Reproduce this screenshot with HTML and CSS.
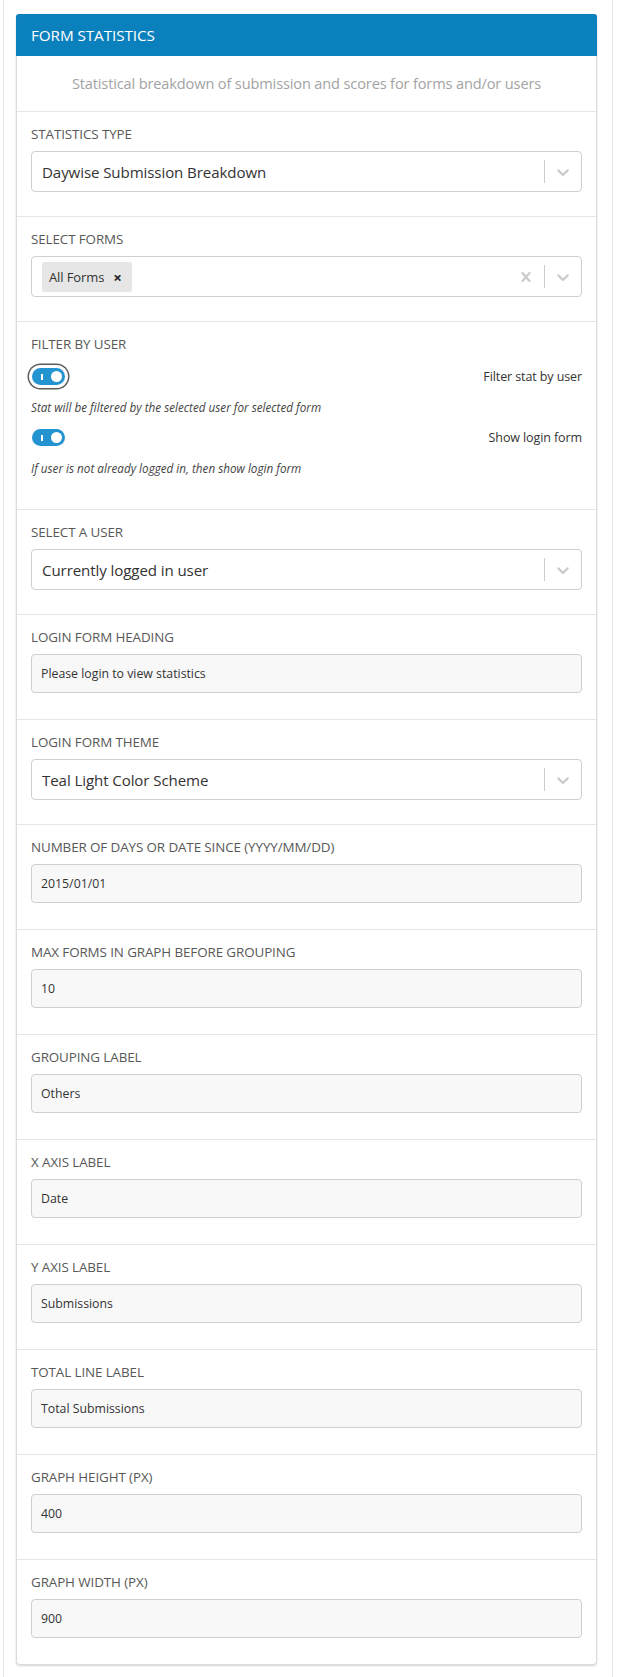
FILE: index.html
```html
<!DOCTYPE html>
<html>
<head>
<meta charset="utf-8">
<title>Form Statistics</title>
<link rel="stylesheet" href="styles.css">
</head>
<body>
<div class="wrap">
  <div class="panel">
    <div class="panel-head">FORM STATISTICS</div>
    <div class="panel-desc">Statistical breakdown of submission and scores for forms and/or users</div>

    <div class="field">
      <div class="label">STATISTICS TYPE</div>
      <div class="select">
        <div class="select-value">Daywise Submission Breakdown</div>
        <span class="sep"></span>
        <span class="ind"><svg viewBox="0 0 20 20" width="20" height="20"><path d="M4.516 7.548c0.436-0.446 1.043-0.481 1.576 0l3.908 3.747 3.908-3.747c0.533-0.481 1.141-0.446 1.574 0 0.436 0.445 0.408 1.197 0 1.615-0.406 0.418-4.695 4.502-4.695 4.502-0.217 0.223-0.502 0.335-0.787 0.335s-0.57-0.112-0.789-0.335c0 0-4.287-4.084-4.695-4.502s-0.436-1.17 0-1.615z"/></svg></span>
      </div>
    </div>

    <div class="field">
      <div class="label">SELECT FORMS</div>
      <div class="select multi">
        <div class="select-value"><span class="tag">All Forms <b class="tag-x">×</b></span></div>
        <span class="ind"><svg viewBox="0 0 20 20" width="20" height="20"><path d="M14.348 14.849c-0.469 0.469-1.229 0.469-1.697 0l-2.651-3.030-2.651 3.029c-0.469 0.469-1.229 0.469-1.697 0-0.469-0.469-0.469-1.229 0-1.697l2.758-3.15-2.759-3.152c-0.469-0.469-0.469-1.228 0-1.697s1.228-0.469 1.697 0l2.652 3.031 2.651-3.031c0.469-0.469 1.228-0.469 1.697 0s0.469 1.229 0 1.697l-2.758 3.152 2.758 3.150c0.469 0.469 0.469 1.229 0 1.698z"/></svg></span>
        <span class="sep"></span>
        <span class="ind"><svg viewBox="0 0 20 20" width="20" height="20"><path d="M4.516 7.548c0.436-0.446 1.043-0.481 1.576 0l3.908 3.747 3.908-3.747c0.533-0.481 1.141-0.446 1.574 0 0.436 0.445 0.408 1.197 0 1.615-0.406 0.418-4.695 4.502-4.695 4.502-0.217 0.223-0.502 0.335-0.787 0.335s-0.57-0.112-0.789-0.335c0 0-4.287-4.084-4.695-4.502s-0.436-1.17 0-1.615z"/></svg></span>
      </div>
    </div>

    <div class="field field-toggles">
      <div class="label">FILTER BY USER</div>
      <div class="toggle-row first">
        <span class="toggle focused"><span class="toggle-bar"></span><span class="toggle-knob"></span></span>
        <span class="toggle-text">Filter stat by user</span>
      </div>
      <div class="help">Stat will be filtered by the selected user for selected form</div>
      <div class="toggle-row">
        <span class="toggle"><span class="toggle-bar"></span><span class="toggle-knob"></span></span>
        <span class="toggle-text">Show login form</span>
      </div>
      <div class="help">If user is not already logged in, then show login form</div>
    </div>

    <div class="field">
      <div class="label">SELECT A USER</div>
      <div class="select">
        <div class="select-value">Currently logged in user</div>
        <span class="sep"></span>
        <span class="ind"><svg viewBox="0 0 20 20" width="20" height="20"><path d="M4.516 7.548c0.436-0.446 1.043-0.481 1.576 0l3.908 3.747 3.908-3.747c0.533-0.481 1.141-0.446 1.574 0 0.436 0.445 0.408 1.197 0 1.615-0.406 0.418-4.695 4.502-4.695 4.502-0.217 0.223-0.502 0.335-0.787 0.335s-0.57-0.112-0.789-0.335c0 0-4.287-4.084-4.695-4.502s-0.436-1.17 0-1.615z"/></svg></span>
      </div>
    </div>

    <div class="field">
      <div class="label">LOGIN FORM HEADING</div>
      <div class="input">Please login to view statistics</div>
    </div>

    <div class="field">
      <div class="label">LOGIN FORM THEME</div>
      <div class="select">
        <div class="select-value">Teal Light Color Scheme</div>
        <span class="sep"></span>
        <span class="ind"><svg viewBox="0 0 20 20" width="20" height="20"><path d="M4.516 7.548c0.436-0.446 1.043-0.481 1.576 0l3.908 3.747 3.908-3.747c0.533-0.481 1.141-0.446 1.574 0 0.436 0.445 0.408 1.197 0 1.615-0.406 0.418-4.695 4.502-4.695 4.502-0.217 0.223-0.502 0.335-0.787 0.335s-0.57-0.112-0.789-0.335c0 0-4.287-4.084-4.695-4.502s-0.436-1.17 0-1.615z"/></svg></span>
      </div>
    </div>

    <div class="field">
      <div class="label">NUMBER OF DAYS OR DATE SINCE (YYYY/MM/DD)</div>
      <div class="input">2015/01/01</div>
    </div>

    <div class="field">
      <div class="label">MAX FORMS IN GRAPH BEFORE GROUPING</div>
      <div class="input">10</div>
    </div>

    <div class="field">
      <div class="label">GROUPING LABEL</div>
      <div class="input">Others</div>
    </div>

    <div class="field">
      <div class="label">X AXIS LABEL</div>
      <div class="input">Date</div>
    </div>

    <div class="field">
      <div class="label">Y AXIS LABEL</div>
      <div class="input">Submissions</div>
    </div>

    <div class="field">
      <div class="label">TOTAL LINE LABEL</div>
      <div class="input">Total Submissions</div>
    </div>

    <div class="field">
      <div class="label">GRAPH HEIGHT (PX)</div>
      <div class="input">400</div>
    </div>

    <div class="field">
      <div class="label">GRAPH WIDTH (PX)</div>
      <div class="input">900</div>
    </div>
  </div>
</div>
</body>
</html>
```

FILE: styles.css
```css
* { box-sizing: border-box; }

html, body {
  margin: 0;
  padding: 0;
  background: #fff;
}

body {
  font-family: "Open Sans", "Noto Sans", "Liberation Sans", sans-serif;
  color: #333;
}

.wrap {
  margin-left: 3px;
  width: 610px;
  min-height: 1677px;
  border-left: 1px solid #e6e6e6;
  border-right: 1px solid #e6e6e6;
  padding: 14px 0 0 12px;
}

.panel {
  width: 581px;
  border: 1px solid #dcdcdc;
  border-top: none;
  border-radius: 4px;
  background: #fff;
  box-shadow: 0 1px 2px rgba(0, 0, 0, 0.18);
}

.panel-head {
  margin: 0 -1px;
  height: 42px;
  background: #0a80bc;
  color: #fff;
  border-radius: 3px 3px 0 0;
  font-size: 15.3px;
  line-height: 42px;
  padding-left: 15px;
  letter-spacing: -0.1px;
}

.panel-desc {
  height: 56px;
  border-bottom: 1px solid #e6e6e6;
  text-align: center;
  color: #a3a3a3;
  font-size: 14.6px;
  line-height: 55px;
  letter-spacing: -0.15px;
}

.field {
  padding: 13px 14px 24px 14px;
  border-bottom: 1px solid #e6e6e6;
}

.field:last-child {
  border-bottom: none;
}

.label {
  font-size: 13.4px;
  line-height: 18px;
  color: #585858;
  margin-bottom: 8px;
  letter-spacing: -0.1px;
}

.select {
  height: 41px;
  border: 1px solid #cfcfcf;
  border-radius: 4px;
  background: #fff;
  display: flex;
  align-items: center;
}

.select-value {
  flex: 1;
  padding-left: 10px;
  font-size: 15.1px;
  color: #333;
  letter-spacing: -0.1px;
}

.sep {
  width: 1px;
  height: 23px;
  background: #cccccc;
}

.ind {
  width: 36px;
  height: 39px;
  display: flex;
  align-items: center;
  justify-content: center;
}

.ind svg {
  fill: #cccccc;
}

.tag {
  display: inline-flex;
  align-items: center;
  height: 30px;
  padding: 0 10px 0 7px;
  background: #e6e6e6;
  border-radius: 2px;
  font-size: 13px;
  color: #333;
}

.tag-x {
  margin-left: 9px;
  font-size: 15px;
  font-weight: 700;
  color: #222;
}

.input {
  height: 39px;
  margin-bottom: 2px;
  border: 1px solid #cfcfcf;
  border-radius: 4px;
  background: #f8f8f8;
  padding-left: 9px;
  font-size: 12.3px;
  line-height: 37px;
  color: #333;
}

.field-toggles {
  padding-bottom: 33px;
}

.toggle-row {
  display: flex;
  justify-content: space-between;
  align-items: center;
  height: 18px;
  margin-top: 13px;
}

.toggle-row.first {
  margin-top: 14px;
}

.toggle {
  position: relative;
  width: 33px;
  height: 17px;
  margin-left: 1px;
  border-radius: 9px;
  background: #2494d1;
}

.toggle.focused {
  box-shadow: 0 0 0 3px #fff, 0 0 0 4.5px #5c5c5c;
}

.toggle-bar {
  position: absolute;
  left: 9px;
  top: 6px;
  width: 2px;
  height: 6px;
  background: #fff;
}

.toggle-knob {
  position: absolute;
  right: 3px;
  top: 3px;
  width: 11px;
  height: 11px;
  border-radius: 50%;
  background: #fff;
}

.toggle-text {
  font-size: 12.5px;
  color: #333;
  letter-spacing: -0.1px;
}

.help {
  margin-top: 14px;
  font-size: 11.7px;
  line-height: 16px;
  font-style: italic;
  color: #444;
}
```
